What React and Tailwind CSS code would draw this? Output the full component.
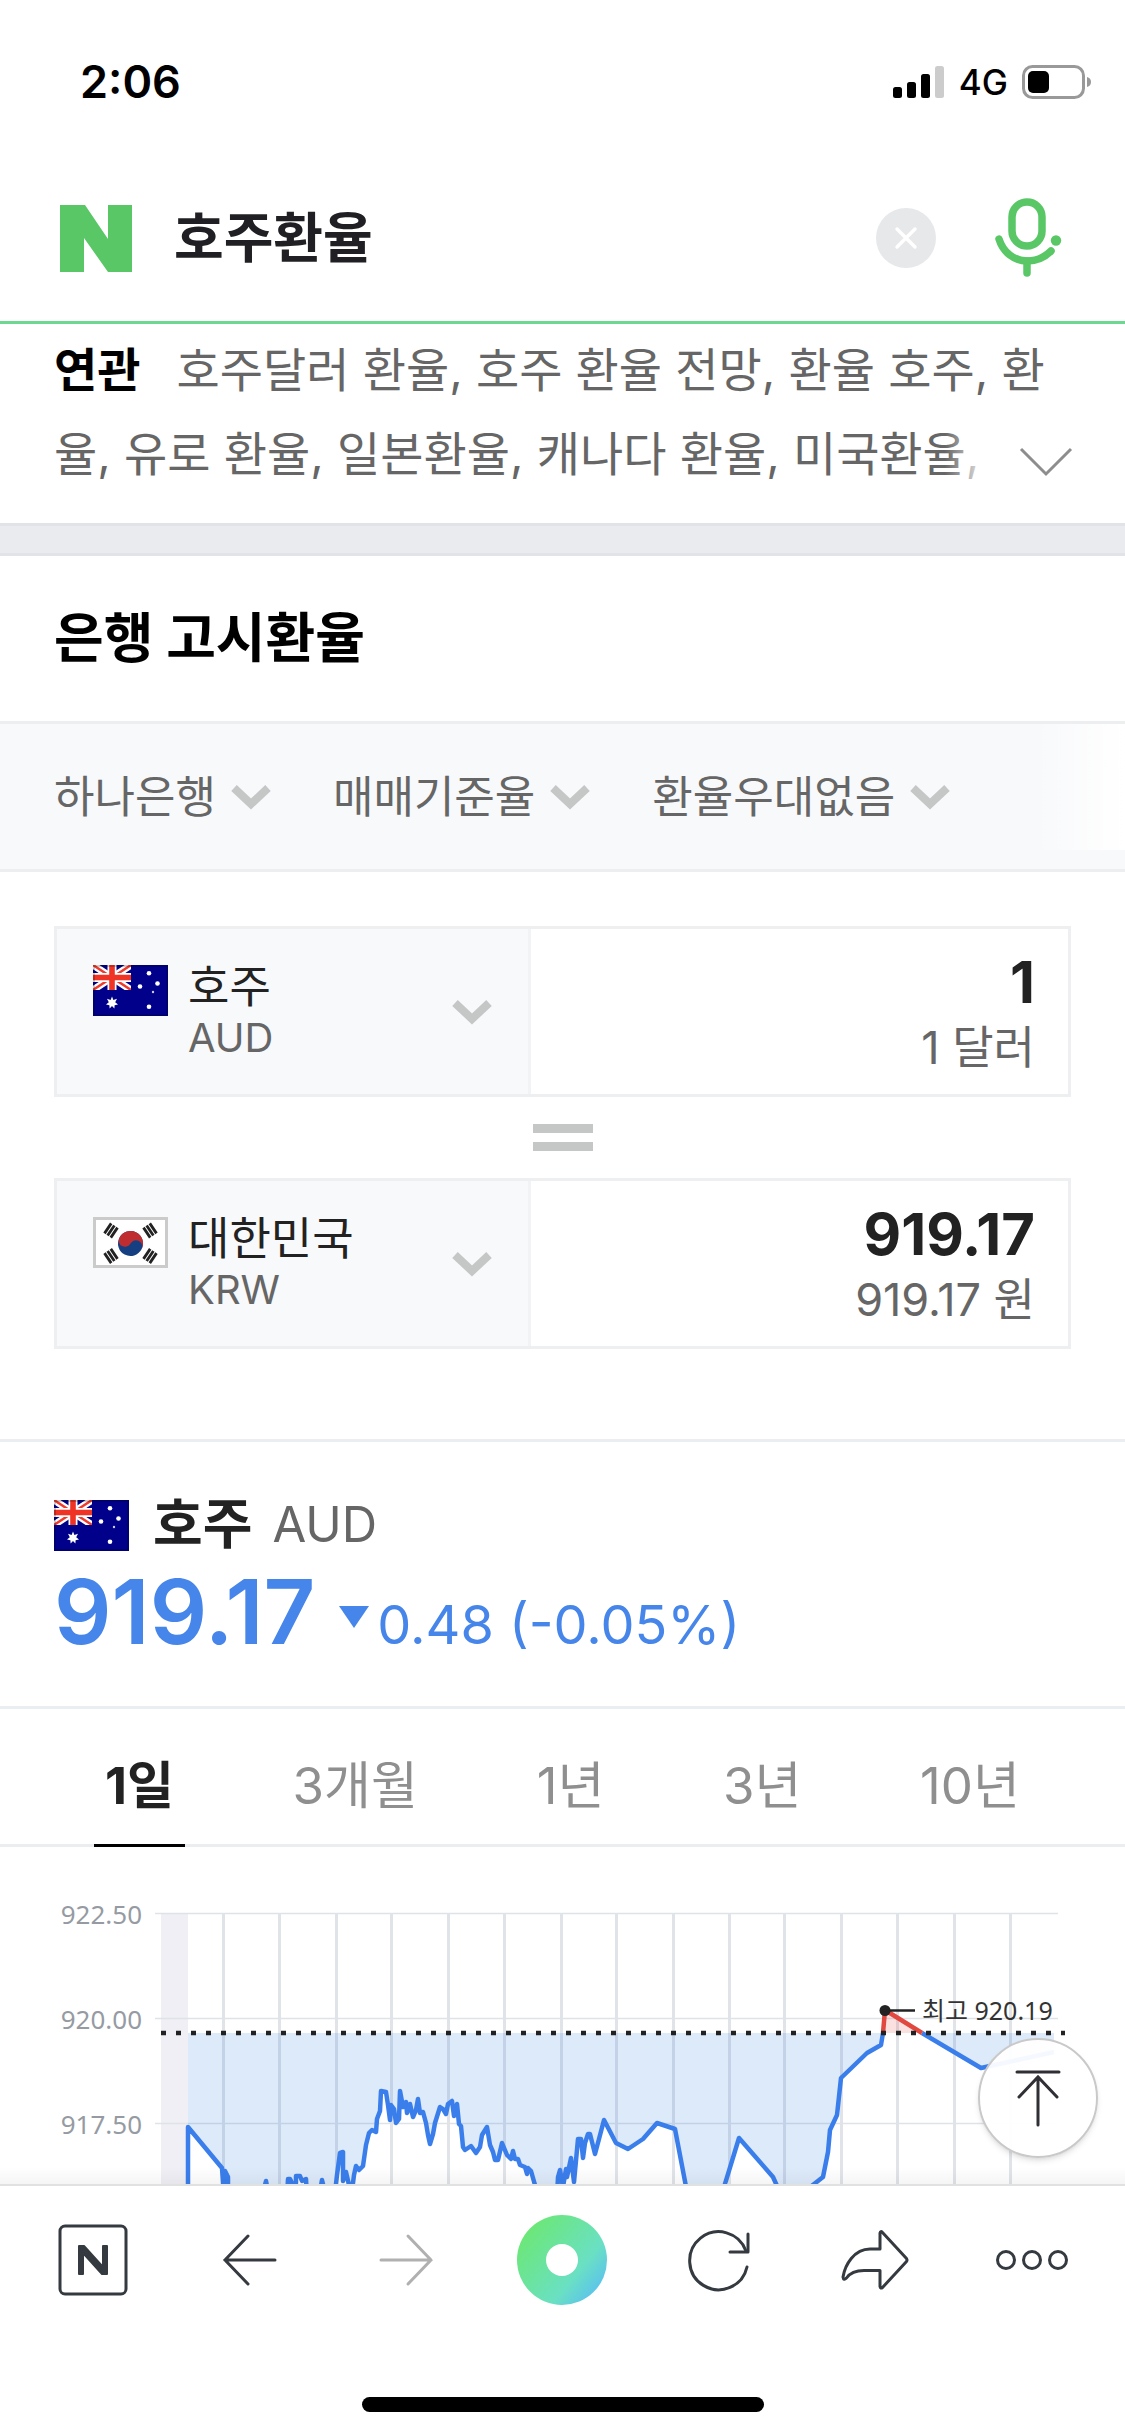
import React, { useState } from 'react';

const RELATED = ['호주달러 환율', '호주 환율 전망', '환율 호주', '환율', '유로 환율', '일본환율', '캐나다 환율', '미국환율'];
const FILTERS = [
    { label: '은행', value: '하나은행' },
    { label: '환율 기준', value: '매매기준율' },
    { label: '환율 우대', value: '환율우대없음' },
];
const TABS = ['1일', '3개월', '1년', '3년', '10년'];

// 차트 좌표
const GRID_X = [223, 279, 336, 391, 448, 504, 561, 616, 673, 729, 784, 841, 897, 954, 1010];
const GRID_Y = [
    { y: 66, label: '922.50' },
    { y: 171, label: '920.00' },
    { y: 276, label: '917.50' },
];
const BASE_Y = 186;
const RATE_BEFORE =
    '188,350 188,280 222,321 224,350 225,324 228,330 228,350 262,350 266,334 269,350 287,350 288,332 290,332 293,338 296,336 296,329 300,329 302,334 306,332 307,350 319,350 322,333 326,350 333,350 336,337 337,328 340,306 343,305 343,334 346,325 349,338 353,336 354,328 356,319 359,323 363,319 366,298 369,286 372,283 376,285 377,272 380,264 381,244 386,245 388,258 390,273 391,258 394,262 396,276 399,272 400,244 403,260 406,255 407,266 410,257 413,270 416,263 418,252 420,266 423,265 426,276 428,288 430,297 433,287 435,276 440,260 443,262 446,267 448,257 452,254 454,269 457,257 459,277 461,279 463,300 465,303 471,299 476,306 480,300 482,288 487,280 490,298 493,305 495,313 498,313 502,296 507,308 511,312 513,304 515,312 518,312 520,318 525,320 527,327 528,321 531,324 535,338 538,350 557,350 558,330 560,323 563,340 566,322 567,330 571,311 574,335 578,292 581,292 583,311 585,296 588,287 590,287 595,307 599,292 604,273 616,296 628,302 643,292 657,276 675,282 688,350 721,350 739,291 773,330 782,350 804,345 823,330 828,305 830,283 837,268 841,231 867,206 881,198 883,186';
const RATE_AFTER = '922,186 981,221 1054,205';

const ChevronSmall = ({ className = '' }) => (
    <svg className={className} width="40" height="26" viewBox="0 0 40 26" fill="none" aria-hidden="true">
        <path d="M3 4 L20 20 L37 4" stroke="#c5c7c7" strokeWidth="8" />
    </svg>
);

const FlagAU = () => (
    <svg className="shrink-0" width="75" height="51" viewBox="0 0 75 51" role="img" aria-label="호주 국기">
        <rect width="75" height="51" fill="#00008b" />
        <svg width="38" height="25" viewBox="0 0 38 25">
            <path d="M0 0 L38 25 M38 0 L0 25" stroke="#fff" strokeWidth="7" />
            <path d="M0 0 L38 25 M38 0 L0 25" stroke="#ef3b2d" strokeWidth="2.4" />
            <path d="M19 0 V25 M0 12.5 H38" stroke="#fff" strokeWidth="9" />
            <path d="M19 0 V25 M0 12.5 H38" stroke="#ef3325" strokeWidth="5.6" />
        </svg>
        <path
            d="M19 31.5 L20.4 35 L24 33.8 L22.2 37.2 L25 39.5 L21.6 40.2 L21.4 43.6 L19 41 L16.6 43.6 L16.4 40.2 L13 39.5 L15.8 37.2 L14 33.8 L17.6 35 Z"
            fill="#fff"
        />
        <g fill="#fff">
            <circle cx="56" cy="8.3" r="2.3" />
            <circle cx="64.5" cy="18.5" r="2.3" />
            <circle cx="47" cy="21.5" r="2.3" />
            <circle cx="56" cy="41.7" r="2.3" />
            <circle cx="60" cy="27" r="1.2" opacity="0.8" />
        </g>
        <rect x="1" y="1" width="73" height="49" fill="none" stroke="#000" strokeOpacity="0.2" strokeWidth="2" />
    </svg>
);

const Trigram = ({ x, y, angle }) => (
    <g transform={`translate(${x} ${y}) rotate(${angle})`} stroke="#222" strokeWidth="2.8">
        <path d="M-6 -3.8 H6 M-6 0 H6 M-6 3.8 H6" />
    </g>
);

const FlagKR = () => (
    <svg className="shrink-0" width="75" height="51" viewBox="0 0 75 51" role="img" aria-label="대한민국 국기">
        <rect x="1.5" y="1.5" width="72" height="48" fill="#fff" stroke="#cbcbcb" strokeWidth="3" />
        <g transform="rotate(28 37.5 26.5)">
            <circle cx="37.5" cy="26.5" r="12.5" fill="#153f80" />
            <path d="M25 26.5 A12.5 12.5 0 0 1 50 26.5 A6.25 6.25 0 0 0 37.5 26.5 A6.25 6.25 0 0 1 25 26.5 Z" fill="#c02d30" />
        </g>
        <Trigram x={18} y={13.5} angle={-56} />
        <Trigram x={57} y={13.5} angle={56} />
        <Trigram x={18} y={39} angle={56} />
        <Trigram x={57} y={39} angle={-56} />
    </svg>
);

const StatusBar = () => (
    <div className="flex h-[164px] items-center justify-between pl-20 pr-[33px] text-black">
        <span className="text-[45px] font-semibold">2:06</span>
        <div className="flex items-center gap-[14px]">
            <svg width="52" height="34" viewBox="0 0 52 34" aria-hidden="true">
                <rect x="0" y="22" width="9" height="11" rx="2.5" />
                <rect x="14" y="17" width="9" height="16" rx="2.5" />
                <rect x="28" y="9" width="9" height="24" rx="2.5" />
                <rect x="42" y="1" width="9" height="32" rx="2.5" fill="#cccccc" />
            </svg>
            <span className="text-[35px] font-medium">4G</span>
            <svg width="70" height="34" viewBox="0 0 70 34" aria-hidden="true">
                <rect x="1.5" y="1.5" width="60" height="31" rx="9" fill="none" stroke="#999" strokeWidth="3" />
                <rect x="6" y="6" width="21" height="22" rx="5" />
                <path d="M65 12 Q69 13 69 17 Q69 21 65 22 Z" fill="#999" />
            </svg>
        </div>
    </div>
);

const SearchHeader = () => {
    const [query, setQuery] = useState('호주환율');

    return (
        <header className="border-b-[3px] border-[#6dd88f] pb-[9px]">
            <form className="flex h-[148px] items-center pl-[60px] pr-[63px]" onSubmit={(e) => e.preventDefault()}>
                <a href="#home" aria-label="홈">
                    <svg width="72" height="67" viewBox="0 0 72 67" fill="#5ac767">
                        <path d="M0 0 H25 L48 34 V0 H72 V67 H48 L24 33 V67 H0 Z" />
                    </svg>
                </a>
                <input
                    type="text"
                    aria-label="검색어"
                    value={query}
                    onChange={(e) => setQuery(e.target.value)}
                    className="ml-[42px] min-w-0 flex-1 text-[54px] font-bold text-[#202024] outline-none"
                />
                <button type="button" aria-label="검색어 지우기" onClick={() => setQuery('')} className="mr-[58px]">
                    <svg width="60" height="60" viewBox="0 0 60 60" fill="none">
                        <circle cx="30" cy="30" r="30" fill="#e6e8ea" />
                        <path d="M21 21 L39 39 M39 21 L21 39" stroke="#fff" strokeWidth="3.4" strokeLinecap="round" />
                    </svg>
                </button>
                <button type="button" aria-label="음성 검색">
                    <svg width="68" height="84" viewBox="0 0 68 84" fill="none" stroke="#5ac767" strokeWidth="7.5" strokeLinecap="round">
                        <rect x="18" y="6" width="30" height="44" rx="15" />
                        <path d="M5 43 C9 56 20 65 33 65 C43 65 51 61 57 55" />
                        <path d="M33 65 V77" />
                        <circle cx="62" cy="44.5" r="5.2" fill="#5ac767" stroke="none" />
                    </svg>
                </button>
            </form>
        </header>
    );
};

const RelatedSearches = () => (
    <section className="relative px-[54px] pb-[27px] pt-1">
        <div className="h-[168px] overflow-hidden break-all text-[47px] leading-[84px] text-[#666]">
            <strong className="mr-9 font-bold text-black">연관</strong>
            {RELATED.map((word) => (
                <React.Fragment key={word}>
                    <a href="#related">{word}</a>,{' '}
                </React.Fragment>
            ))}
        </div>
        <button
            type="button"
            aria-label="연관 검색어 펼치기"
            className="absolute bottom-[27px] right-0 flex h-[84px] w-[180px] items-center justify-end bg-linear-to-r from-transparent to-white to-25% pr-[52px]"
        >
            <svg className="mt-4" width="54" height="30" viewBox="0 0 54 30" fill="none">
                <path d="M2 2 L27 27 L52 2" stroke="#8d8d8d" strokeWidth="3" />
            </svg>
        </button>
    </section>
);

const CurrencyBox = ({ flag, name, code, amount, unit }) => {
    const [value, setValue] = useState(amount);

    return (
        <div className="flex border-[3px] border-[#eeeff1]">
            <button
                type="button"
                aria-haspopup="listbox"
                className="flex w-[474px] items-center border-r-[3px] border-[#f2f3f5] bg-[#f8f9fb] px-9 text-left"
            >
                <span className="mt-1 self-start pt-8">{flag}</span>
                <span className="ml-5 flex flex-1 flex-col leading-[51px]">
                    <span className="text-[45px] text-[#222]">{name}</span>
                    <span className="text-[40px] text-[#666]">{code}</span>
                </span>
                <ChevronSmall />
            </button>
            <label className="flex min-w-0 flex-1 flex-col px-[33px] pb-[14px] pt-[21px] text-right leading-[65px]">
                <input
                    type="text"
                    inputMode="decimal"
                    aria-label={`${name} 금액`}
                    value={value}
                    onChange={(e) => setValue(e.target.value)}
                    className="h-[65px] w-full text-right text-[58px] font-bold text-[#222] outline-none"
                />
                <span className="text-[45px] text-[#666]">{unit}</span>
            </label>
        </div>
    );
};

const RateChart = () => (
    <svg className="block w-full" viewBox="0 0 1125 337" role="img" aria-label="호주 달러 환율 1일 차트">
        <defs>
            <linearGradient id="chartFade" x1="0" y1="0" x2="0" y2="1">
                <stop offset="0" stopColor="#000" stopOpacity="0" />
                <stop offset="1" stopColor="#000" stopOpacity="0.04" />
            </linearGradient>
        </defs>
        <rect x="161" y="66" width="27" height="280" fill="#efeff5" />
        {GRID_Y.map(({ y, label }) => (
            <g key={label}>
                <path d={`M155 ${y + 0.5} H1058`} stroke="#dfe2e7" strokeWidth="1.5" />
                <text x="142" y={y + 11} textAnchor="end" fill="#969ba3" className="font-['Noto_Sans',sans-serif] text-[26px]">
                    {label}
                </text>
            </g>
        ))}
        {GRID_X.map((x) => (
            <path key={x} d={`M${x + 0.5} 66 V340`} stroke="#e0e3e8" strokeWidth="3" />
        ))}

        {/* 기준선 아래 영역 */}
        <polygon points={`188,186 ${RATE_BEFORE}`} fill="#3481e0" fillOpacity="0.17" />
        <polygon points={`${RATE_AFTER} 1054,186`} fill="#3481e0" fillOpacity="0.17" />
        <polygon points="883,186 885,163 922,186" fill="#e04840" fillOpacity="0.17" />

        <g fill="none" strokeWidth="4.5" strokeLinejoin="round">
            <polyline points={RATE_BEFORE} stroke="#3a7eec" />
            <polyline points={RATE_AFTER} stroke="#3a7eec" />
            <polyline points="883,186 885,163 922,186" stroke="#e04840" />
        </g>
        <path d={`M161 ${BASE_Y} H1065`} stroke="#222" strokeWidth="4.5" strokeDasharray="5 10" />

        <circle cx="885" cy="163.5" r="5.5" fill="#222" />
        <path d="M885 163.5 H915" stroke="#222" strokeWidth="2.5" />
        <text x="922" y="173" fill="#333" className="font-['Noto_Sans','Noto_Sans_CJK_KR',sans-serif] text-[25px]">
            최고 920.19
        </text>
        <rect x="0" y="320" width="1125" height="17" fill="url(#chartFade)" />
    </svg>
);

const NavButton = ({ label, disabled, children }) => (
    <button type="button" aria-label={label} disabled={disabled} className="flex h-full flex-1 items-center justify-center">
        {children}
    </button>
);

const BottomBar = () => (
    <footer className="border-t-2 border-[#e0e1e1] bg-white">
        <nav className="flex h-[148px] items-center px-[15px]">
            <NavButton label="네이버 홈">
                <svg width="70" height="72" viewBox="0 0 70 72" fill="none" stroke="#343a40" strokeWidth="3">
                    <rect x="2" y="2" width="66" height="68" rx="5" />
                    <path d="M21 22 H26 L45 43 V22 H49 V50 H44 L25 29 V50 H21 Z" fill="#343a40" strokeWidth="2" strokeLinejoin="round" />
                </svg>
            </NavButton>
            <NavButton label="뒤로">
                <svg width="56" height="54" viewBox="0 0 56 54" fill="none" stroke="#343a40" strokeWidth="3" strokeLinecap="round">
                    <path d="M53 27 H3 M26 3 L3 27 L26 51" />
                </svg>
            </NavButton>
            <NavButton label="앞으로" disabled>
                <svg width="56" height="54" viewBox="0 0 56 54" fill="none" stroke="#b0b0b0" strokeWidth="3" strokeLinecap="round">
                    <path d="M3 27 H53 M30 3 L53 27 L30 51" />
                </svg>
            </NavButton>
            <NavButton label="그린닷">
                <svg width="90" height="90" viewBox="0 0 90 90">
                    <defs>
                        <linearGradient id="greenDot" x1="0.1" y1="0.2" x2="0.9" y2="0.85">
                            <stop offset="0" stopColor="#6ce778" />
                            <stop offset="0.7" stopColor="#6ae0c3" />
                            <stop offset="1" stopColor="#5cc3ec" />
                        </linearGradient>
                    </defs>
                    <circle cx="45" cy="45" r="45" fill="url(#greenDot)" />
                    <circle cx="45" cy="45" r="16" fill="#fff" />
                </svg>
            </NavButton>
            <NavButton label="새로고침">
                <svg width="64" height="64" viewBox="0 0 64 64" fill="none" stroke="#343a40" strokeWidth="3" strokeLinecap="round" strokeLinejoin="round">
                    <path d="M60 39 A29 29 0 1 1 59 23" />
                    <path d="M61 6 V24 H43" />
                </svg>
            </NavButton>
            <NavButton label="공유">
                <svg width="68" height="62" viewBox="0 0 68 62" fill="none" stroke="#343a40" strokeWidth="3" strokeLinejoin="round">
                    <path d="M39 20 V4 Q39.5 1.5 41.5 3.5 L65.5 29.5 Q66.5 31 65.5 32.5 L41.5 58.5 Q39.5 60 39 57.5 V41.5 H23 C14 41.5 9 44 5.5 49 Q2.5 52 2 48 C4 36 13 20 29 20 Z" />
                </svg>
            </NavButton>
            <NavButton label="더보기">
                <svg width="74" height="22" viewBox="0 0 74 22" fill="none" stroke="#343a40" strokeWidth="3">
                    <circle cx="11" cy="11" r="8.5" />
                    <circle cx="37" cy="11" r="8.5" />
                    <circle cx="63" cy="11" r="8.5" />
                </svg>
            </NavButton>
        </nav>
        <div className="pb-6 pt-[63px]">
            <div className="mx-auto h-[15px] w-[402px] rounded-full bg-black" />
        </div>
    </footer>
);

const App = () => {
    const [activeTab, setActiveTab] = useState('1일');

    return (
        <div className="min-h-screen bg-white font-['Inter','Noto_Sans_CJK_KR',sans-serif]">
            <StatusBar />
            <SearchHeader />
            <main className="relative">
                <RelatedSearches />

                <div className="h-[33px] border-y-[3px] border-[#e1e3e8] bg-[#e9ebef]" />

                <h2 className="px-[54px] text-[54px] font-bold leading-[165px] text-black">은행 고시환율</h2>

                {/* 은행 / 기준 / 우대 선택 */}
                <div className="relative flex h-[151px] items-center gap-[62px] border-y-[3px] border-[#eceef0] bg-[#f8f9fb] px-[54px]">
                    {FILTERS.map(({ label, value }) => (
                        <label key={label} className="flex items-center gap-[15px]">
                            <select aria-label={label} className="field-sizing-content appearance-none text-[44px] text-[#666] outline-none">
                                <option>{value}</option>
                            </select>
                            <ChevronSmall />
                        </label>
                    ))}
                    <div className="pointer-events-none absolute right-0 top-0 h-[126px] w-[90px] bg-linear-to-r from-transparent to-white" />
                </div>

                <section className="px-[54px] pb-[90px] pt-[54px]">
                    <CurrencyBox flag={<FlagAU />} name="호주" code="AUD" amount="1" unit="1 달러" />
                    <div className="flex h-[81px] flex-col items-center justify-center gap-[9px]">
                        <span className="h-[9px] w-[60px] bg-[#c5c7c7]" />
                        <span className="h-[9px] w-[60px] bg-[#c5c7c7]" />
                    </div>
                    <CurrencyBox flag={<FlagKR />} name="대한민국" code="KRW" amount="919.17" unit="919.17 원" />
                </section>

                <section className="border-y-[3px] border-[#ebeef1] px-[54px] pb-[42px] pt-12">
                    <div className="flex items-center leading-[70px]">
                        <FlagAU />
                        <h3 className="ml-6 text-[54px] font-bold text-[#222]">호주</h3>
                        <span className="ml-5 text-[49px] text-[#666]">AUD</span>
                    </div>
                    <div className="flex items-baseline text-[#4685e9]">
                        <strong className="text-[90px] font-semibold leading-[104px]">919.17</strong>
                        <svg className="ml-6 mr-2 -translate-y-4" width="30" height="22" viewBox="0 0 30 22" fill="currentColor" role="img" aria-label="하락">
                            <path d="M0 0 H30 L15 22 Z" />
                        </svg>
                        <span className="text-[54px] leading-[60px]">0.48 (-0.05%)</span>
                    </div>
                </section>

                <div role="tablist" className="flex justify-between border-b-[3px] border-[#ebeef1] px-[94px] pt-[18px]">
                    {TABS.map((tab) => (
                        <button
                            key={tab}
                            type="button"
                            role="tab"
                            aria-selected={activeTab === tab}
                            onClick={() => setActiveTab(tab)}
                            className={`-mb-[3px] border-b-[3px] px-[11px] text-[51px] leading-[117px] ${
                                activeTab === tab ? 'border-black font-bold text-[#222]' : 'border-transparent text-[#8f8f8f]'
                            }`}
                        >
                            {tab}
                        </button>
                    ))}
                </div>

                <RateChart />

                <button
                    type="button"
                    aria-label="맨 위로"
                    className="absolute bottom-[26px] right-[27px] flex size-[120px] items-center justify-center rounded-full border-2 border-[#c9c9c9] bg-white/95 shadow-md"
                >
                    <svg width="48" height="58" viewBox="0 0 48 58" fill="none" stroke="#2f2f35" strokeWidth="3" strokeLinecap="round">
                        <path d="M3 3 H45 M24 8 V56 M5 28 L24 8 L43 28" />
                    </svg>
                </button>
            </main>
            <BottomBar />
        </div>
    );
};

export default App;
